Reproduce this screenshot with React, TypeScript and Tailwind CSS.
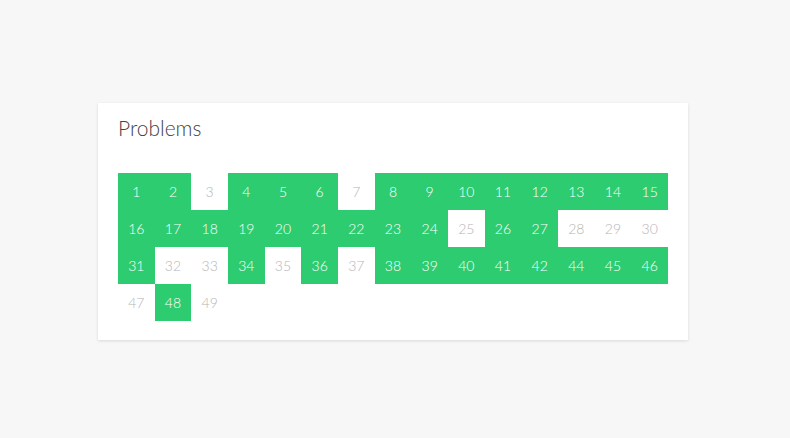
type Problem = { n: number; solved: boolean };

const solved = new Set([
  1, 2, 4, 5, 6, 8, 9, 10, 11, 12, 13, 14, 15, 16, 17, 18, 19, 20, 21, 22, 23, 24, 26, 27,
  31, 34, 36, 38, 39, 40, 41, 42, 44, 45, 46, 48,
]);

const numbers = [
  1, 2, 3, 4, 5, 6, 7, 8, 9, 10, 11, 12, 13, 14, 15, 16, 17, 18, 19, 20, 21, 22, 23, 24, 25,
  26, 27, 28, 29, 30, 31, 32, 33, 34, 35, 36, 37, 38, 39, 40, 41, 42, 44, 45, 46, 47, 48, 49,
];

const problems: Problem[] = numbers.map((n) => ({ n, solved: solved.has(n) }));

export default function App() {
  return (
    <div
      className="min-h-[438px] bg-[#f7f7f7] pt-[103px] pl-[98px]"
      style={{ fontFamily: "Lato, 'Open Sans', sans-serif" }}
    >
      <div className="w-[590px] bg-white px-5 pt-[11px] pb-[19px] shadow-[0_1px_3px_rgba(0,0,0,0.12)]">
        <h2 className="text-[21px] leading-[28px] font-light text-[#444] mb-[31px]">Problems</h2>

        <div className="grid [grid-template-columns:repeat(15,minmax(0,1fr))]">
          {problems.map((p) => (
            <div
              key={p.n}
              className={
                p.solved
                  ? "h-[37px] flex items-center justify-center text-[14px] font-light bg-[#2ecc71] text-white"
                  : "h-[37px] flex items-center justify-center text-[14px] font-light bg-white text-[#b5b5b5]"
              }
            >
              {p.n}
            </div>
          ))}
        </div>
      </div>
    </div>
  );
}
